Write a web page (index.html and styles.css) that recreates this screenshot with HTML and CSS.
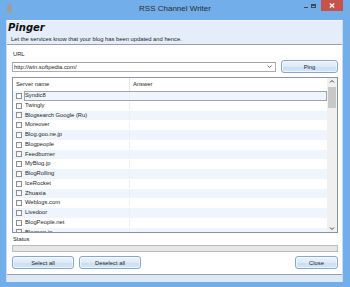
FILE: index.html
```html
<!DOCTYPE html>
<html lang="en">
<head>
  <meta charset="UTF-8">
  <title>RSS Channel Writer</title>
  <link rel="stylesheet" href="styles.css">
</head>
<body>
  <div class="window">
    <div class="titlebar">
      <div class="tb-left">
        <svg class="app-icon" width="7" height="10" viewBox="0 0 7 10">
          <path d="M3.5 0.5 C2 0.5 1.4 2 1.4 3.6 L1.1 7 L0.3 7.8 H6.7 L5.9 7 L5.6 3.6 C5.6 2 5 0.5 3.5 0.5 Z" fill="#9a9da3"/>
          <rect x="2" y="8" width="3" height="1.8" rx="0.6" fill="#e8902c"/>
        </svg>
      </div>
      <div class="title">RSS Channel Writer</div>
      <div class="controls">
        <span class="ctl-min"></span>
        <span class="ctl-max"></span>
        <span class="ctl-close">
          <svg width="6" height="5" viewBox="0 0 6 5">
            <path d="M0.8 0.5 L5.2 4.5 M5.2 0.5 L0.8 4.5" stroke="#fff" stroke-width="1.3"/>
          </svg>
        </span>
      </div>
    </div>

    <div class="client">
      <div class="banner">
        <div class="banner-title">Pinger</div>
        <div class="banner-text">Let the services know that your blog has been updated and hence.</div>
      </div>

      <div class="body">
        <div class="label">URL</div>
        <div class="url-row">
          <div class="combo">
            <span class="combo-text">http://win.softpedia.com/</span>
            <svg class="combo-arrow" width="5" height="3" viewBox="0 0 5 3">
              <path d="M0.5 0.5 L2.5 2.5 L4.5 0.5" fill="none" stroke="#555" stroke-width="0.9"/>
            </svg>
          </div>
          <div class="btn btn-ping">Ping</div>
        </div>

        <div class="list">
          <div class="list-main">
            <div class="list-head">
              <div class="col-name">Server name</div>
              <div class="col-answer">Answer</div>
            </div>
            <div class="rows" id="rows"></div>
          </div>
          <div class="scrollbar">
            <svg class="sb-arrow" width="10" height="7" viewBox="0 0 10 7">
              <path d="M3 4.5 L5 2.5 L7 4.5" fill="none" stroke="#444" stroke-width="1"/>
            </svg>
            <div class="sb-track">
              <div class="sb-thumb"></div>
            </div>
            <svg class="sb-arrow" width="10" height="7" viewBox="0 0 10 7">
              <path d="M3 2.5 L5 4.5 L7 2.5" fill="none" stroke="#444" stroke-width="1"/>
            </svg>
          </div>
        </div>

        <div class="label status-label">Status</div>
        <div class="progress"></div>

        <div class="buttons">
          <div class="btn btn-wide">Select all</div>
          <div class="btn btn-wide">Deselect all</div>
          <div class="spacer"></div>
          <div class="btn btn-close">Close</div>
        </div>
      </div>

      <div class="statusstrip"></div>
    </div>
  </div>

  <script>
    const SERVERS = [
      'Syndic8', 'Twingly', 'Blogsearch Google (Ru)', 'Moreover',
      'Blog.goo.ne.jp', 'Blogpeople', 'Feedburner', 'MyBlog.jp',
      'BlogRolling', 'IceRocket', 'Zhuaxia', 'Weblogs.com',
      'Livedoor', 'BlogPeople.net', 'Blogoon.jp'
    ];

    document.getElementById('rows').innerHTML = SERVERS.map((name, i) => `
      <div class="row${i % 2 === 0 ? ' odd' : ''}">
        <div class="check-cell"><span class="check"></span></div>
        <div class="row-body${i === 0 ? ' focus' : ''}">
          <div class="cell-name">${name}</div>
          <div class="cell-answer"></div>
        </div>
      </div>
    `).join('');
  </script>
</body>
</html>
```

FILE: styles.css
```css
* {
  box-sizing: border-box;
}

body {
  margin: 0;
  font-family: 'Liberation Sans', Arial, sans-serif;
  font-size: 5.8px;
  color: #1e1e1e;
}

.window {
  width: 350px;
  height: 287px;
  background: #72aee9;
  display: flex;
  flex-direction: column;
  overflow: hidden;
}

/* title bar */
.titlebar {
  height: 20px;
  display: grid;
  grid-template-columns: 1fr auto 1fr;
  align-items: start;
}

.tb-left {
  padding: 3px 0 0 6px;
}

.app-icon {
  display: block;
}

.title {
  font-size: 8px;
  line-height: 18px;
  color: #2b2b2b;
}

.controls {
  display: flex;
  justify-content: flex-end;
  align-items: flex-start;
  padding-right: 7px;
}

.ctl-min {
  width: 4px;
  height: 1px;
  background: #3a4a5c;
  margin: 7px 3px 0 0;
}

.ctl-max {
  width: 5px;
  height: 4px;
  border: 1px solid #3a4a5c;
  border-top-width: 2px;
  margin: 4px 5px 0 0;
}

.ctl-close {
  width: 22px;
  height: 11px;
  background: #c7514b;
  display: flex;
  align-items: center;
  justify-content: center;
}

.ctl-close svg {
  display: block;
}

/* client area */
.client {
  margin: 0 7px 0 6px;
  height: 262px;
  background: #fff;
  border-left: 1px solid #c8dcf1;
  border-right: 1px solid #c8dcf1;
  display: flex;
  flex-direction: column;
}

.banner {
  height: 25px;
  background: #e4edf9;
  border-top: 1px solid #f3f7fd;
  border-bottom: 1px solid #9c9fa4;
  padding: 1px 0 0 1px;
}

.banner-title {
  font-family: 'DejaVu Sans', sans-serif;
  font-weight: bold;
  font-style: italic;
  font-size: 10px;
  line-height: 11px;
  color: #111;
}

.banner-text {
  line-height: 9px;
  margin-top: 2px;
  padding-left: 3px;
}

.body {
  height: 229px;
  padding: 5px 4px 5px 5px;
  display: flex;
  flex-direction: column;
}

.label {
  height: 8px;
  line-height: 8px;
  padding-left: 1px;
}

.url-row {
  margin-top: 2px;
  height: 13px;
  display: flex;
  align-items: center;
  gap: 5px;
}

.combo {
  flex: 1;
  height: 10px;
  border: 1px solid #abadb3;
  border-top-color: #9da1a8;
  display: flex;
  align-items: center;
  padding: 0 3px 0 1px;
}

.combo-text {
  flex: 1;
  line-height: 8px;
}

.combo-arrow {
  display: block;
}

.btn {
  height: 13px;
  border: 1px solid #8aa7c7;
  border-radius: 3px;
  background: linear-gradient(#eaf3fc 0%, #dceaf8 50%, #c9dff4 51%, #d3e5f7 100%);
  box-shadow: inset 0 0 0 1px rgba(255, 255, 255, 0.6);
  display: flex;
  align-items: center;
  justify-content: center;
  line-height: 8px;
}

.btn-ping {
  width: 57px;
}

/* list view */
.list {
  margin-top: 4px;
  height: 156px;
  border: 1px solid #8f949b;
  display: flex;
}

.list-main {
  flex: 1;
  overflow: hidden;
}

.list-head {
  height: 13px;
  display: flex;
  background: #fff;
  line-height: 12px;
}

.list-head .col-name {
  width: 117px;
  padding-left: 3px;
  border-right: 1px solid #e3e5e8;
}

.list-head .col-answer {
  padding-left: 3px;
}

.row {
  height: 9.75px;
  display: flex;
}

.row.odd {
  background: #eef5fd;
}

.check-cell {
  width: 11px;
  padding-left: 3px;
  display: flex;
  align-items: center;
}

.check {
  width: 6px;
  height: 6px;
  border: 1px solid #8e8f8f;
  background: linear-gradient(#f1f1f1, #fff);
}

.row-body {
  flex: 1;
  display: flex;
  border: 1px solid transparent;
}

.row-body.focus {
  border-color: #a3a3a3;
}

.cell-name {
  width: 105px;
  line-height: 7.75px;
  border-right: 1px solid #eceef1;
  white-space: nowrap;
}

.cell-answer {
  flex: 1;
}

.scrollbar {
  width: 10px;
  background: #f0f0f0;
  display: flex;
  flex-direction: column;
}

.sb-arrow {
  display: block;
}

.sb-track {
  flex: 1;
  padding: 2px 1px 0;
}

.sb-thumb {
  height: 21px;
  background: #c8c8c8;
}

/* status + buttons */
.status-label {
  margin-top: 2px;
}

.progress {
  margin-top: 2px;
  height: 7px;
  border: 1px solid #bcbcbc;
  background: #e6e6e6;
}

.buttons {
  margin-top: 4px;
  display: flex;
  gap: 5px;
}

.btn-wide {
  width: 62px;
}

.spacer {
  flex: 1;
}

.btn-close {
  width: 43px;
}

.statusstrip {
  flex: 1;
  background: #dfe9f5;
  border-top: 1px solid #9c9fa4;
}
```
